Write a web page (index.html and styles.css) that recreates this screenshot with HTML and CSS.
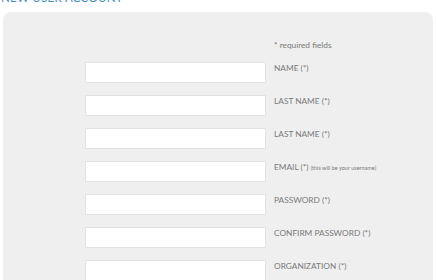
FILE: index.html
```html
<!DOCTYPE html>
<html>
<head>
<meta charset="utf-8">
<link rel="stylesheet" href="styles.css">
</head>
<body>
<h1 class="title">NEW USER ACCOUNT</h1>
<div class="panel">
  <div class="form">
    <div class="spacer"></div>
    <div class="note">* required fields</div>

    <input class="field" type="text">
    <label class="label">NAME (*)</label>

    <input class="field" type="text">
    <label class="label">LAST NAME (*)</label>

    <input class="field" type="text">
    <label class="label">LAST NAME (*)</label>

    <input class="field" type="text">
    <label class="label">EMAIL (*) <small class="hint">(this will be your username)</small></label>

    <input class="field" type="password">
    <label class="label">PASSWORD (*)</label>

    <input class="field" type="password">
    <label class="label">CONFIRM PASSWORD (*)</label>

    <input class="field" type="text">
    <label class="label">ORGANIZATION (*)</label>
  </div>
</div>
</body>
</html>
```
FILE: styles.css
```css
html, body {
  margin: 0;
  padding: 0;
  background: #ffffff;
  overflow: hidden;
}
body {
  font-family: Lato, "Open Sans", sans-serif;
  width: 438px;
  height: 280px;
}
.title {
  margin: -8px 0 0 1px;
  height: 12px;
  font-size: 11.5px;
  line-height: 12px;
  font-weight: 400;
  color: #3f8dc8;
  letter-spacing: 0.3px;
}
.panel {
  margin: 8px 5px 0 3px;
  background: #efefef;
  border-radius: 8px;
  height: 300px;
}
.form {
  display: grid;
  grid-template-columns: 181px 1fr;
  column-gap: 8px;
  row-gap: 12px;
  padding: 28px 0 0 82px;
}
.spacer { height: 10px; }
.note {
  font-size: 8.3px;
  line-height: 10px;
  color: #7a7a7a;
}
.field {
  box-sizing: border-box;
  width: 181px;
  height: 21px;
  margin: 0;
  border: 1px solid #e2e2e2;
  background: #fff;
  border-radius: 1px;
  padding: 0;
}
.label {
  font-size: 8.3px;
  line-height: 10px;
  padding-top: 1px;
  color: #7a7a7a;
}
.hint {
  font-size: 5.5px;
}
```
